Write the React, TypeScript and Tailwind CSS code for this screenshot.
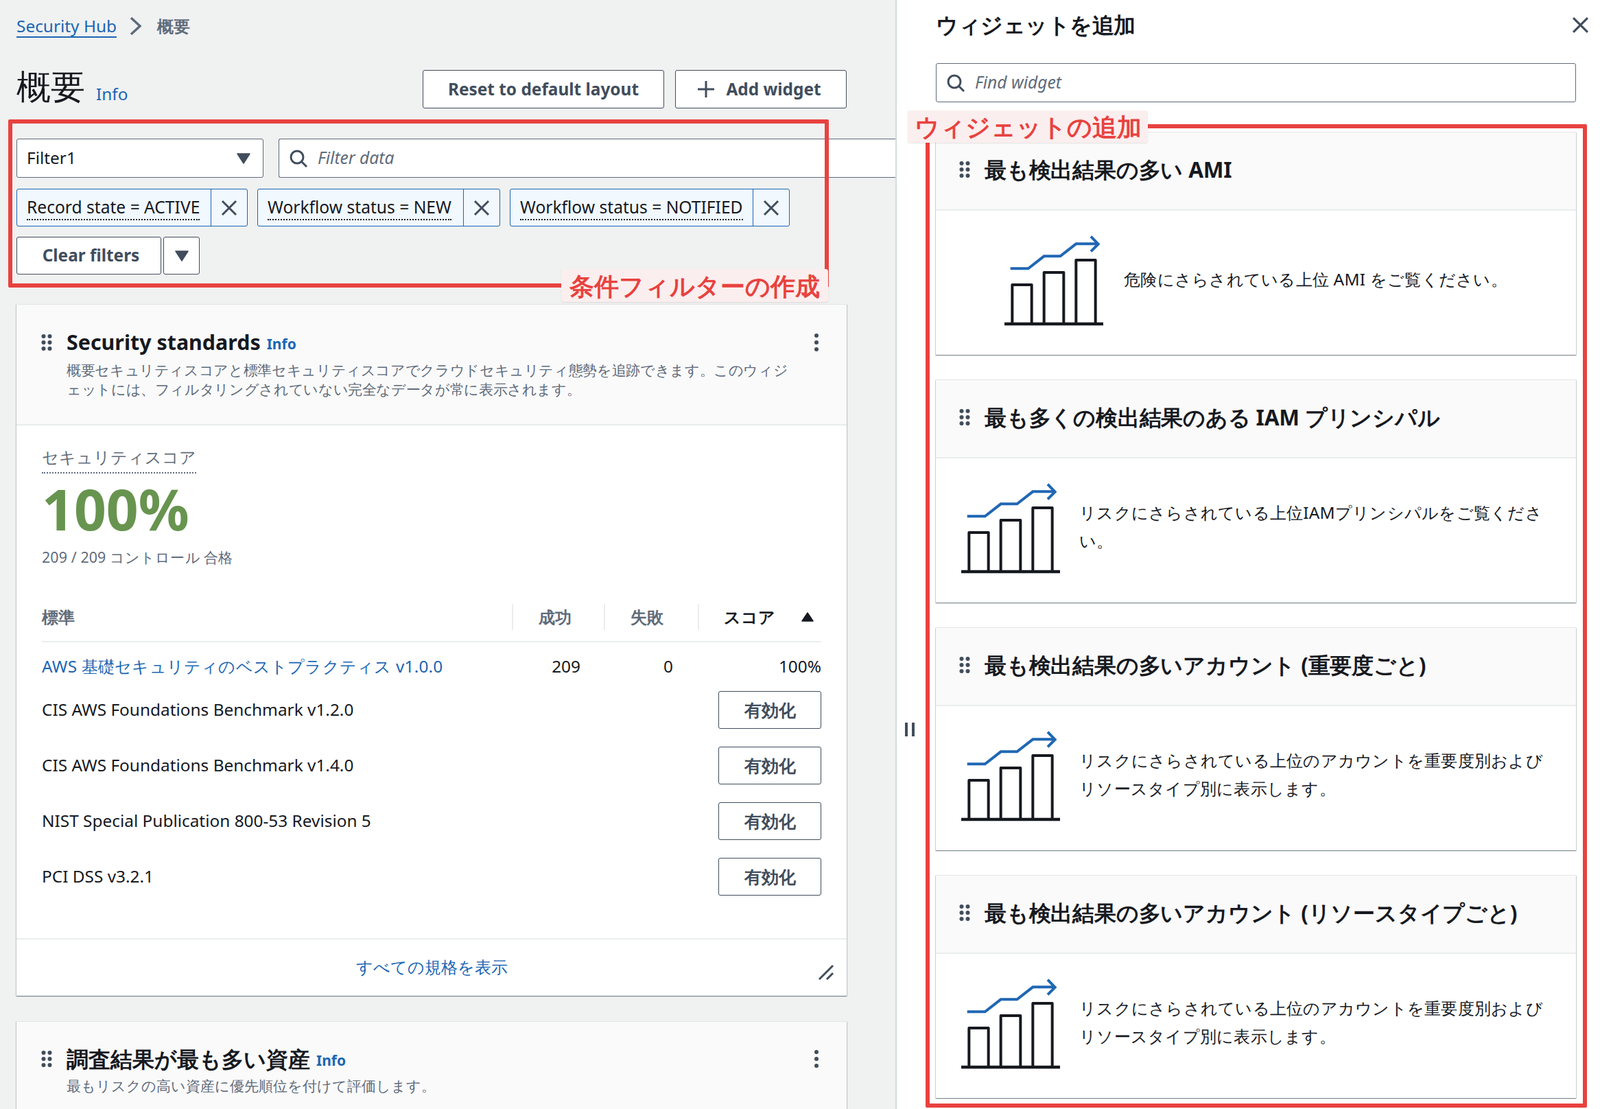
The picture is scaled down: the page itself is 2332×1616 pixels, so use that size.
import React from "react";

const Search = () => (
  <svg width="28" height="28" viewBox="0 0 28 28" fill="none" stroke="#414d5c" strokeWidth="3" className="shrink-0">
    <circle cx="12" cy="12" r="9" />
    <path d="M18.5 18.5 L26 26" />
  </svg>
);
const Close = ({ s = 24 }: { s?: number }) => (
  <svg width={s} height={s} viewBox="0 0 24 24" fill="none" stroke="#414d5c" strokeWidth="3" className="shrink-0">
    <path d="M2 2 L22 22 M22 2 L2 22" />
  </svg>
);
const Caret = () => (
  <svg width="20" height="16" viewBox="0 0 20 16" className="shrink-0">
    <path d="M1 1 H19 L10 15 Z" fill="#414d5c" stroke="#414d5c" strokeWidth="1.5" strokeLinejoin="round" />
  </svg>
);
const Drag = () => (
  <svg width="16" height="26" viewBox="0 0 16 26" fill="#414d5c" className="shrink-0">
    {[4, 13, 22].map((y) => (
      <g key={y}>
        <circle cx="3.5" cy={y} r="3" />
        <circle cx="12.5" cy={y} r="3" />
      </g>
    ))}
  </svg>
);
const Kebab = () => (
  <svg width="8" height="28" viewBox="0 0 8 28" fill="#414d5c">
    <circle cx="4" cy="4" r="3" />
    <circle cx="4" cy="14" r="3" />
    <circle cx="4" cy="24" r="3" />
  </svg>
);
const Chart = () => (
  <svg width="146" height="132" viewBox="372 70 438 396" fill="none" className="shrink-0">
    <path d="M372 457 H804" stroke="#16191f" strokeWidth="13" />
    <g stroke="#16191f" strokeWidth="12" strokeLinejoin="round">
      <path d="M406 457 V286 H491 V457" />
      <path d="M545 457 V232 H631 V457" />
      <path d="M685 457 V178 H770 V457" />
    </g>
    <path d="M398 215 H476 L545 161 H616 L685 107 H778 M750 75 L782 108 L750 140" stroke="#2067b4" strokeWidth="12" />
  </svg>
);

const Info = ({ bold, cls }: { bold?: boolean; cls: string }) => (
  <span className={`text-[#1b66b3] ${bold ? "font-bold" : ""} ${cls}`}>Info</span>
);

const Btn = ({ children, cls }: { children: React.ReactNode; cls: string }) => (
  <button className={`flex items-center justify-center bg-white border-[1.5px] border-[#414d5c] rounded-[3px] text-[#414d5c] font-bold ${cls}`}>
    {children}
  </button>
);

const Chip = ({ text, w }: { text: string; w: string }) => (
  <div className={`flex h-[55px] bg-[#f1f8fe] border-[1.5px] border-[#1b66b3] rounded-[3px] ${w}`}>
    <div className="flex-1 flex items-center pl-[14px] border-r-[1.5px] border-[#1b66b3]">
      <span className="text-[24.6px] leading-[34px] text-[#16191f] border-b-2 border-dotted border-[#16191f] whitespace-nowrap">{text}</span>
    </div>
    <div className="w-[52px] flex items-center justify-center">
      <Close />
    </div>
  </div>
);

const CardShadow = "shadow-[0_1px_1px_0_rgba(0,28,36,0.3),1px_1px_1px_0_rgba(0,28,36,0.15),-1px_1px_1px_0_rgba(0,28,36,0.15)]";

const Row = ({ name }: { name: string }) => (
  <div className="flex h-[55px] mb-[26px] items-center justify-between">
    <span className="text-[24.4px] text-[#16191f]">{name}</span>
    <Btn cls="w-[150px] h-[55px] text-[25px]">有効化</Btn>
  </div>
);

const Widget = ({ title, text, first }: { title: string; text: string; first?: boolean }) => (
  <div className={`h-[325px] mb-[36px] border-t border-[#e3e5e5] bg-white ${CardShadow}`}>
    <div className="h-[114px] bg-[#fafafa] border-b-2 border-[#eaeded] flex items-center pb-[5px] pl-[34px]">
      <Drag />
      <span className="ml-[21px] text-[31.5px] tracking-[-0.2px] leading-[40px] font-bold text-[#16191f] whitespace-nowrap">{title}</span>
    </div>
    <div className={`h-[210px] flex items-center pb-[6px] ${first ? "pl-[100px] gap-[28px]" : "pl-[37px] gap-[26px]"}`}>
      <Chart />
      <p className="w-[690px] mb-[6px] text-[24.4px] tracking-[0.25px] leading-[41px] text-[#16191f]">{text}</p>
    </div>
  </div>
);

export default function App() {
  return (
    <div lang="ja" className="relative w-[2332px] h-[1616px] flex overflow-hidden bg-white font-['Noto_Sans','Noto_Sans_CJK_JP',sans-serif]">
      {/* left column */}
      <div className="w-[1305px] h-full shrink-0 bg-[#f0f1f1] pl-[24px] pr-[71px] overflow-hidden">
        <div className="flex items-center h-[34px] mt-[21px] text-[24.4px] leading-[34px]">
          <span className="text-[#1b66b3] border-b-2 border-[#1b66b3] leading-[31px]">Security Hub</span>
          <svg width="18" height="28" viewBox="0 0 18 28" fill="none" stroke="#5f6b7a" strokeWidth="3.5" className="ml-[19px]">
            <path d="M2 2 L15 14 L2 26" />
          </svg>
          <span className="ml-[22px] text-[#5f6b7a] font-bold text-[24px]">概要</span>
        </div>
        <div className="flex justify-between items-start mt-[47px] h-[56px]">
          <div className="flex items-end -mt-[11px]">
            <span className="text-[50px] leading-[68px] text-[#16191f]">概要</span>
            <Info cls="ml-[16px] text-[24.4px] leading-[44px]" />
          </div>
          <div className="flex gap-[16px]">
            <Btn cls="w-[352px] h-[56px] text-[24.4px]">Reset to default layout</Btn>
            <Btn cls="w-[250px] h-[56px] gap-[16px] text-[24.4px] pr-[5px]">
              <svg width="26" height="26" viewBox="0 0 26 26" stroke="#414d5c" strokeWidth="3">
                <path d="M13 1 V25 M1 13 H25" />
              </svg>
              Add widget
            </Btn>
          </div>
        </div>
        <div className="flex gap-[22px] mt-[44px] -mr-[71px] h-[57px]">
          <div className="w-[360px] bg-white border-[1.5px] border-[#5f6b7a] rounded-[3px] flex items-center justify-between pl-[14px] pr-[18px]">
            <span className="text-[24.4px] text-[#16191f]">Filter1</span>
            <Caret />
          </div>
          <div className="flex-1 bg-white border-[1.5px] border-r-0 border-[#5f6b7a] rounded-l-[3px] flex items-center pl-[14px] gap-[14px]">
            <Search />
            <span className="text-[24.6px] italic text-[#5f6b7a]">Filter data</span>
          </div>
        </div>
        <div className="flex gap-[14px] mt-[16px]">
          <Chip text="Record state = ACTIVE" w="w-[337px]" />
          <Chip text="Workflow status = NEW" w="w-[354px]" />
          <Chip text="Workflow status = NOTIFIED" w="w-[408px]" />
        </div>
        <div className="flex gap-[3px] mt-[15px] h-[55px]">
          <Btn cls="w-[211px] h-[55px] text-[24.4px] pl-[6px]">Clear filters</Btn>
          <Btn cls="w-[53px] h-[55px]">
            <Caret />
          </Btn>
        </div>
        {/* card 1 */}
        <div className={`mt-[43px] w-[1210px] bg-white border-t border-[#e3e5e5] ${CardShadow}`}>
          <div className="h-[176px] bg-[#fafafa] border-b-2 border-[#eaeded] pt-[34px] pl-[36px] pr-[40px]">
            <div className="flex items-center justify-between h-[42px]">
              <div className="flex items-center">
                <Drag />
                <span className="ml-[21px] text-[30.4px] leading-[42px] font-bold text-[#16191f]">Security standards</span>
                <Info bold cls="ml-[9px] text-[21px] mt-[6px]" />
              </div>
              <Kebab />
            </div>
            <p className="ml-[37px] mt-[5px] text-[21px] tracking-[-0.36px] leading-[28px] text-[#5f6b7a] whitespace-nowrap">
              概要セキュリティスコアと標準セキュリティスコアでクラウドセキュリティ態勢を追跡できます。このウィジ
              <br />
              ェットには、フィルタリングされていない完全なデータが常に表示されます。
            </p>
          </div>
          <div className="px-[37px] pt-[26px]">
            <span className="inline-block text-[24px] leading-[40px] h-[44px] text-[#5f6b7a] border-b-2 border-dotted border-[#5f6b7a]">セキュリティスコア</span>
            <div className="text-[82px] leading-[90px] font-bold text-[#67944f] mt-[6px]">100%</div>
            <div className="text-[21.4px] tracking-[0.1px] leading-[30px] text-[#5f6b7a] mt-[11px]">209 / 209 コントロール 合格</div>
            <div className="mt-[53px] grid grid-cols-[685px_134px_137px_180px] h-[56px] border-b-2 border-[#eaeded] pb-[18px] text-[24.4px] font-bold text-[#5f6b7a] items-center">
              <span>標準</span>
              <span className="border-l-2 border-[#eaeded] pl-[37px] leading-[38px]">成功</span>
              <span className="border-l-2 border-[#eaeded] pl-[37px] leading-[38px]">失敗</span>
              <span className="border-l-2 border-[#eaeded] pl-[36px] leading-[38px] text-[#16191f] flex items-center justify-between pr-[11px]">
                スコア
                <svg width="18" height="14" viewBox="0 0 18 14">
                  <path d="M9 1 L17 13 H1 Z" fill="#16191f" stroke="#16191f" strokeWidth="1.5" strokeLinejoin="round" />
                </svg>
              </span>
            </div>
            <div className="grid grid-cols-[685px_134px_137px_180px] h-[71px] items-center text-[24.4px] text-[#16191f]">
              <span className="text-[#1b66b3] whitespace-nowrap tracking-[0.2px]">AWS 基礎セキュリティのベストプラクティス v1.0.0</span>
              <span className="text-right pr-[34px]">209</span>
              <span className="text-right pr-[36px]">0</span>
              <span className="text-right">100%</span>
            </div>
            <Row name="CIS AWS Foundations Benchmark v1.2.0" />
            <Row name="CIS AWS Foundations Benchmark v1.4.0" />
            <Row name="NIST Special Publication 800-53 Revision 5" />
            <Row name="PCI DSS v3.2.1" />
          </div>
          <div className="mt-[62px] h-[84px] border-t-2 border-[#eaeded] relative flex items-center justify-center pb-[2px]">
            <span className="text-[24.4px] text-[#1b66b3]">すべての規格を表示</span>
            <svg width="24" height="24" viewBox="0 0 24 24" stroke="#414d5c" strokeWidth="3" className="absolute right-[18px] bottom-[22px]">
              <path d="M2 22 L22 2 M13 22 L22 13" />
            </svg>
          </div>
        </div>
        {/* card 2 */}
        <div className={`mt-[37px] w-[1210px] h-[200px] bg-[#fafafa] border-t border-[#e3e5e5] ${CardShadow} pt-[33px] pl-[36px] pr-[40px]`}>
          <div className="flex items-center justify-between h-[42px]">
            <div className="flex items-center">
              <Drag />
              <span className="ml-[21px] text-[32px] leading-[42px] font-bold text-[#16191f]">調査結果が最も多い資産</span>
              <Info bold cls="ml-[9px] text-[21px] mt-[6px]" />
            </div>
            <Kebab />
          </div>
          <p className="ml-[37px] mt-[4px] text-[20.9px] leading-[28px] text-[#5f6b7a]">最もリスクの高い資産に優先順位を付けて評価します。</p>
        </div>
      </div>

      {/* right panel */}
      <div className="flex-1 border-l-2 border-[#d5dbdb] bg-white flex h-full overflow-hidden">
        <div className="w-[57px] shrink-0 pt-[1053px] pl-[12px]">
          <div className="flex gap-[6px]">
            <div className="w-[4px] h-[20px] bg-[#414d5c]" />
            <div className="w-[4px] h-[20px] bg-[#414d5c]" />
          </div>
        </div>
        <div className="w-[933px] shrink-0 pt-[13px]">
          <div className="flex items-center justify-between h-[46px]">
            <span className="text-[31.5px] tracking-[-0.5px] leading-[46px] font-bold text-[#16191f]">ウィジェットを追加</span>
            <div className="-mr-[19px]">
              <Close s={25} />
            </div>
          </div>
          <div className="mt-[33px] h-[57px] bg-white border-[1.5px] border-[#5f6b7a] rounded-[3px] flex items-center pl-[14px] gap-[14px]">
            <Search />
            <span className="text-[24.6px] italic text-[#5f6b7a]">Find widget</span>
          </div>
          <div className="mt-[43px]">
            <Widget first title="最も検出結果の多い AMI" text="危険にさらされている上位 AMI をご覧ください。" />
            <Widget title="最も多くの検出結果のある IAM プリンシパル" text="リスクにさらされている上位IAMプリンシパルをご覧ください。" />
            <Widget title="最も検出結果の多いアカウント (重要度ごと)" text="リスクにさらされている上位のアカウントを重要度別およびリソースタイプ別に表示します。" />
            <Widget title="最も検出結果の多いアカウント (リソースタイプごと)" text="リスクにさらされている上位のアカウントを重要度別およびリソースタイプ別に表示します。" />
          </div>
        </div>
      </div>

      {/* annotations */}
      <div className="absolute left-[12px] top-[174px] w-[1196px] h-[245px] border-[6px] border-[#e8423f] rounded-[2px] pointer-events-none" />
      <div className="absolute left-[818px] top-[392px] h-[48px] w-[389px] bg-[#fbeeee] rounded-[4px] flex items-center justify-center text-[36.4px] font-bold text-[#e8423f] whitespace-nowrap shadow-[0_1px_2px_rgba(0,0,0,0.1)]">条件フィルターの作成</div>
      <div className="absolute left-[1349px] top-[181px] w-[964px] h-[1433px] border-[6px] border-[#e8423f] rounded-[2px] pointer-events-none" />
      <div className="absolute left-[1323px] top-[161px] h-[47px] w-[350px] bg-[#fbeeee] rounded-[4px] flex items-center justify-center text-[36px] font-bold text-[#e8423f] whitespace-nowrap shadow-[0_1px_2px_rgba(0,0,0,0.1)]">ウィジェットの追加</div>
    </div>
  );
}
